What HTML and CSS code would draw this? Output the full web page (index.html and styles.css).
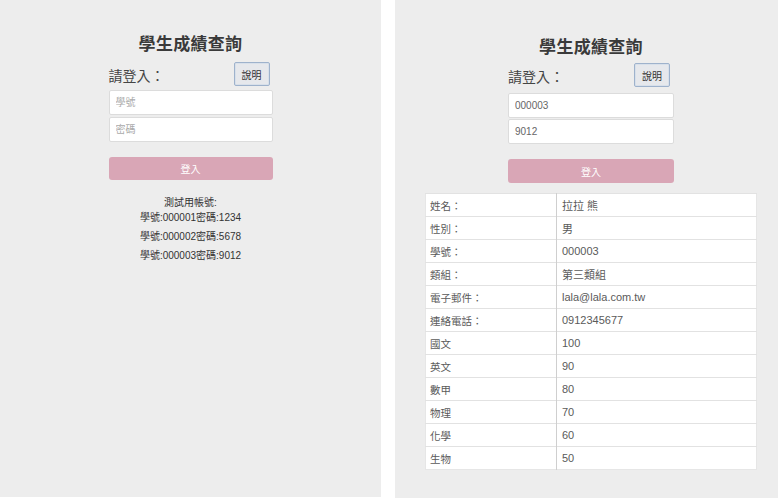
FILE: index.html
```html
<!DOCTYPE html>
<html lang="zh-Hant">
<head>
<meta charset="utf-8">
<title>學生成績查詢</title>
<link rel="stylesheet" href="styles.css">
</head>
<body>
<div class="page">
  <section class="panel panel-left">
    <h1 class="title">學生成績查詢</h1>
    <div class="form">
      <div class="login-row">
        <span class="login-label">請登入：</span>
        <button class="help-btn" type="button">說明</button>
      </div>
      <div class="inputs">
        <input class="field" type="text" placeholder="學號">
        <input class="field" type="password" placeholder="密碼">
      </div>
      <button class="submit" type="button">登入</button>
    </div>
    <div class="accounts">
      <p class="acc-head">測試用帳號:<br>學號:000001密碼:1234</p>
      <p class="acc-line">學號:000002密碼:5678</p>
      <p class="acc-line">學號:000003密碼:9012</p>
    </div>
  </section>
  <section class="panel panel-right">
    <h1 class="title">學生成績查詢</h1>
    <div class="form form-wide">
      <div class="login-row">
        <span class="login-label">請登入：</span>
        <button class="help-btn" type="button">說明</button>
      </div>
      <div class="inputs">
        <input class="field filled" type="text" value="000003">
        <input class="field filled" type="text" value="9012">
      </div>
      <button class="submit" type="button">登入</button>
    </div>
    <table class="result">
      <tr><td class="k">姓名：</td><td class="v">拉拉 熊</td></tr>
      <tr><td class="k">性別：</td><td class="v">男</td></tr>
      <tr><td class="k">學號：</td><td class="v">000003</td></tr>
      <tr><td class="k">類組：</td><td class="v">第三類組</td></tr>
      <tr><td class="k">電子郵件：</td><td class="v">lala@lala.com.tw</td></tr>
      <tr><td class="k">連絡電話：</td><td class="v">0912345677</td></tr>
      <tr><td class="k">國文</td><td class="v">100</td></tr>
      <tr><td class="k">英文</td><td class="v">90</td></tr>
      <tr><td class="k">數甲</td><td class="v">80</td></tr>
      <tr><td class="k">物理</td><td class="v">70</td></tr>
      <tr><td class="k">化學</td><td class="v">60</td></tr>
      <tr><td class="k">生物</td><td class="v">50</td></tr>
    </table>
  </section>
</div>
</body>
</html>
```
FILE: styles.css
```css
* { box-sizing: border-box; }
html, body { margin: 0; padding: 0; background: #ffffff; }
body {
  font-family: "Liberation Sans", Arial, "Noto Sans CJK TC", sans-serif;
  color: #333;
}
.page {
  display: flex;
  gap: 14px;
  width: 779px;
  height: 499px;
}
.panel {
  background: #ededed;
  display: flex;
  flex-direction: column;
  align-items: center;
}
.panel-left {
  width: 381px;
  height: 497px;
  padding-top: 33px;
}
.panel-right {
  width: 383px;
  height: 498px;
  padding-top: 36px;
  padding-left: 9px;
}
.title {
  margin: 0;
  font-family: "Liberation Serif", "Noto Sans CJK TC", serif;
  font-size: 17px;
  line-height: 24px;
  font-weight: bold;
  color: #3a3a3a;
  letter-spacing: 0.3px;
}
.form {
  width: 164px;
  margin-top: 5px;
  display: flex;
  flex-direction: column;
}
.form-wide { width: 166px; margin-top: 3px; }
.login-row {
  display: flex;
  justify-content: space-between;
  align-items: center;
  height: 24px;
}
.login-label {
  font-family: "Noto Sans CJK TC", sans-serif;
  font-size: 14px;
  color: #444;
  padding-top: 2px;
}
.help-btn {
  width: 36px;
  height: 24px;
  margin-right: 3px;
  padding: 0;
  background: #e6e8ec;
  border: 1px solid #9eb2cc;
  box-shadow: inset 0 0 0 1px #d8e0ea;
  border-radius: 2px;
  font-family: "Noto Sans CJK TC", sans-serif;
  font-size: 10px;
  color: #333;
}
.panel-right .help-btn { margin-right: 4px; }
.inputs {
  margin-top: 4px;
  display: flex;
  flex-direction: column;
  gap: 2px;
}
.panel-right .inputs { margin-top: 6px; gap: 1px; }
.field {
  width: 100%;
  height: 25px;
  margin: 0;
  padding: 0 6px;
  background: #fff;
  border: 1px solid #dcdcdc;
  border-radius: 2px;
  font-family: "Liberation Sans", "Noto Sans CJK TC", sans-serif;
  font-size: 10px;
  color: #666;
  outline: none;
}
.field::placeholder { color: #aaa; font-family: "Noto Sans CJK TC", sans-serif; }
.submit {
  margin-top: 15px;
  height: 23px;
  width: 100%;
  padding: 0;
  border: none;
  border-radius: 3px;
  background: #d9a6b6;
  color: #fff;
  font-family: "Noto Sans CJK TC", sans-serif;
  font-size: 10px;
}
.panel-right .submit { height: 24px; }
.accounts {
  margin-top: 15px;
  text-align: center;
  font-family: "Liberation Sans", "Noto Sans CJK TC", sans-serif;
  font-size: 10px;
  color: #333;
}
.accounts p { margin: 0; }
.acc-head { line-height: 15px; }
.acc-line { line-height: 15px; margin-top: 4px !important; }
.result {
  margin-top: 10px;
  width: 332px;
  border-collapse: collapse;
  background: #fff;
  border: 1px solid #e6e6e6;
  font-family: "Liberation Sans", "Noto Sans CJK TC", sans-serif;
  font-size: 11px;
  color: #5a5a5a;
}
.result td {
  height: 23px;
  padding: 0 4px;
  border-top: 1px solid #e2e2e2;
  vertical-align: middle;
}
.result td.k { width: 131px; border-right: 1px solid #cfcfcf; font-size: 10.5px; }
.result td.v { padding-left: 5px; }
```
